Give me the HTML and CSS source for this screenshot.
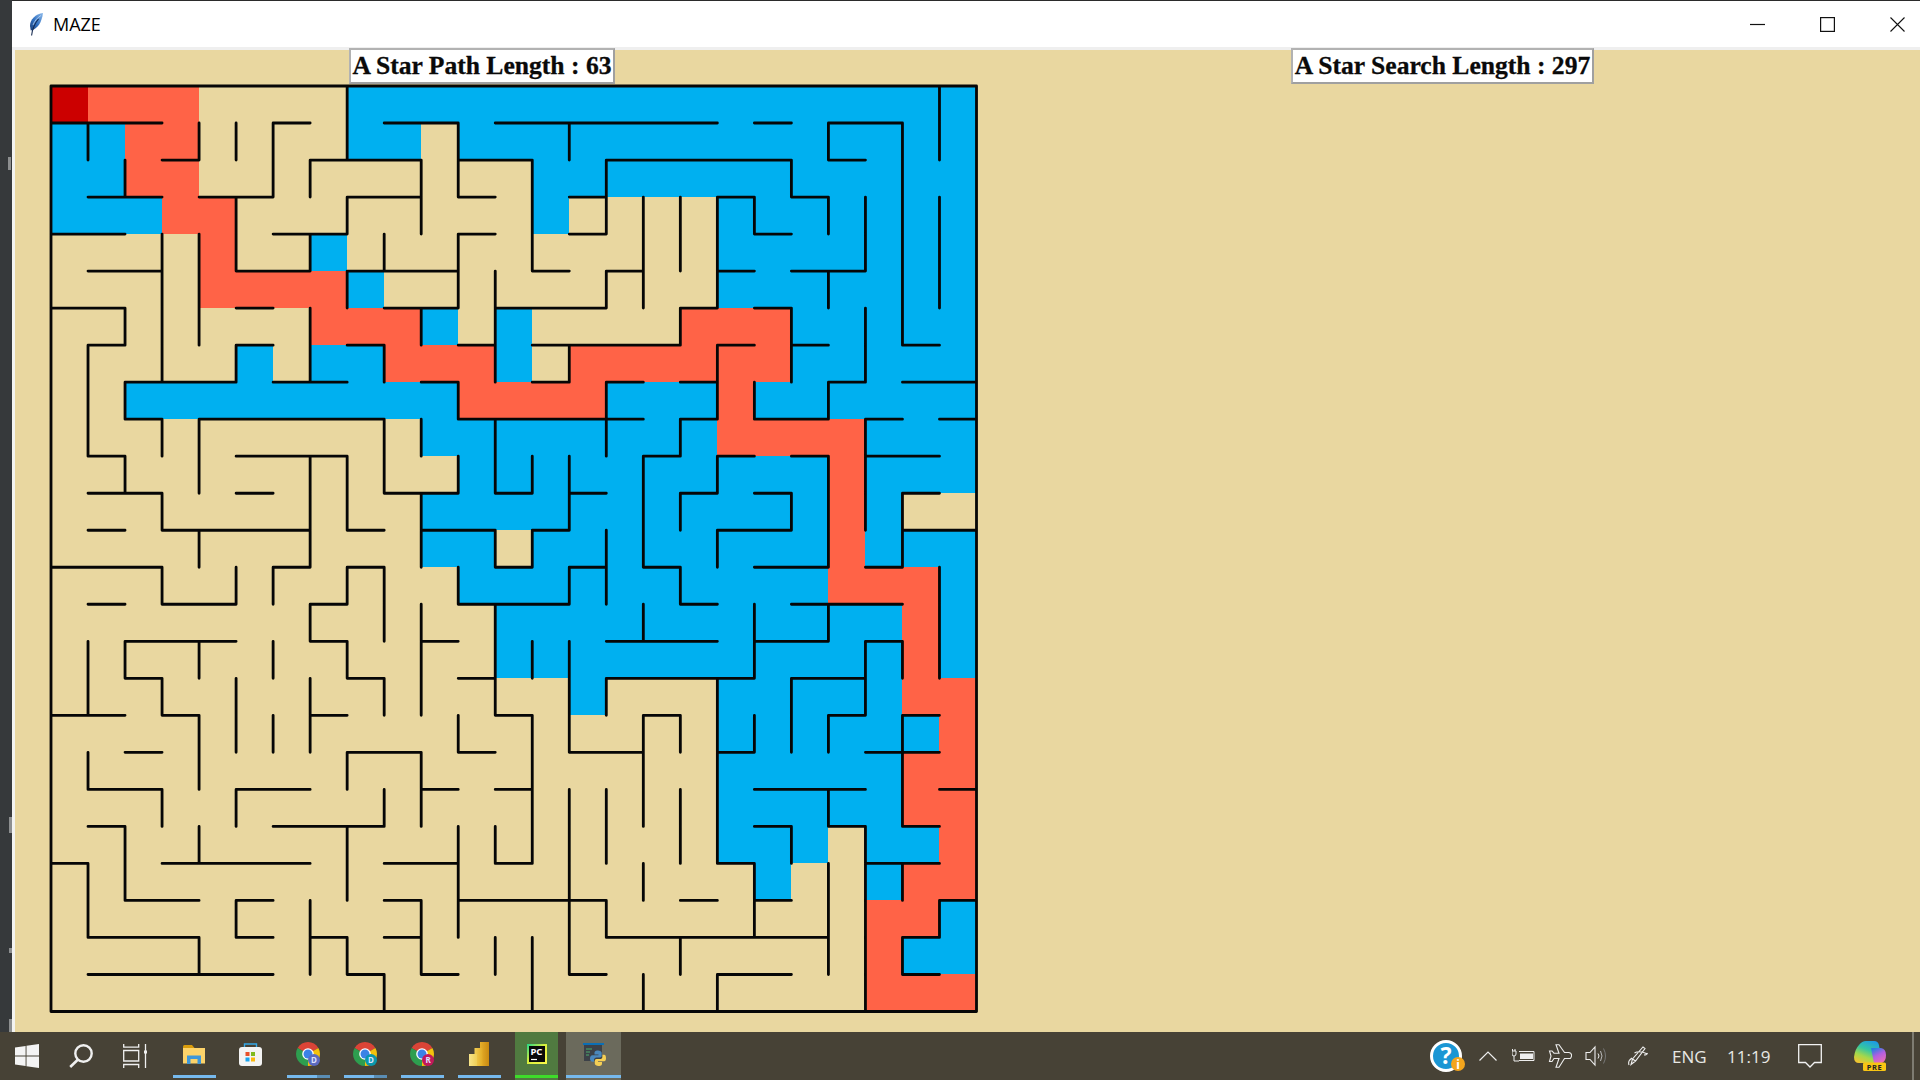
FILE: index.html
```html
<!DOCTYPE html>
<html lang="en">
<head>
<meta charset="utf-8">
<title>MAZE</title>
<link rel="stylesheet" href="styles.css">
</head>
<body>
<svg class="defs" width="0" height="0" aria-hidden="true">
  <symbol id="chrome" viewBox="0 0 24 24">
    <path fill="#db4437" d="M12 12L1.61 6A12 12 0 0 1 22.39 6Z"/>
    <path fill="#f4c20d" d="M12 12L22.39 6A12 12 0 0 1 12 24Z"/>
    <path fill="#2e9e4f" d="M12 12L12 24A12 12 0 0 1 1.61 6Z"/>
    <circle cx="12" cy="12" r="5.8" fill="#fff"/>
    <circle cx="12" cy="12" r="4.5" fill="#3b82e6"/>
  </symbol>
  <linearGradient id="pcg" x1="0" y1="0" x2="1" y2="1">
    <stop offset="0" stop-color="#21d789"/><stop offset=".45" stop-color="#d6ee3c"/><stop offset="1" stop-color="#fcf84a"/>
  </linearGradient>
  <linearGradient id="featherg" x1="1" y1="0" x2="0" y2="1">
    <stop offset="0" stop-color="#8fbcec"/><stop offset=".55" stop-color="#2f6fc0"/><stop offset="1" stop-color="#1b3f78"/>
  </linearGradient>
  <linearGradient id="pbig1" x1="0" y1="0" x2="1" y2="0"><stop offset="0" stop-color="#f8e58a"/><stop offset="1" stop-color="#f0ce55"/></linearGradient>
  <linearGradient id="pbig2" x1="0" y1="0" x2="1" y2="0"><stop offset="0" stop-color="#f3cf55"/><stop offset="1" stop-color="#e2ac25"/></linearGradient>
  <linearGradient id="pbig3" x1="0" y1="0" x2="1" y2="0"><stop offset="0" stop-color="#e6b02c"/><stop offset="1" stop-color="#c98a10"/></linearGradient>
  <linearGradient id="copg" x1=".7" y1="0" x2=".2" y2="1">
    <stop offset="0" stop-color="#1c9be6"/><stop offset=".4" stop-color="#35c7a0"/><stop offset=".7" stop-color="#a6d84a"/><stop offset="1" stop-color="#f2c230"/>
  </linearGradient>
  <linearGradient id="copg2" x1=".3" y1="0" x2=".8" y2="1">
    <stop offset="0" stop-color="#2a7fe0"/><stop offset=".45" stop-color="#b45fe0"/><stop offset="1" stop-color="#f070b0"/>
  </linearGradient>
</svg>
<div class="screen">
  <div class="desk">
    <div class="strip">
      <span class="tick tick-a"></span>
      <span class="tick tick-b"></span>
      <span class="tick tick-c"></span>
      <span class="tick tick-d"></span>
    </div>
    <div class="window">
      <header class="titlebar">
        <svg class="feather" viewBox="0 0 14 23">
          <path fill="url(#featherg)" d="M14 0C6.5 1 1 6.5 1 13L1.8 17.5C9 16 13 8.5 14 0Z"/>
          <path fill="none" stroke="#cfe0f5" stroke-width=".7" d="M12 2.5C8.5 4.5 5.5 8 4 12"/>
          <path fill="none" stroke="#14294f" stroke-width="1.1" d="M9.5 6C6 10 3.5 15 2.6 22.5"/>
        </svg>
        <span class="title">MAZE</span>
        <div class="controls">
          <span class="ctrl"><svg width="15" height="15" viewBox="0 0 15 15"><path d="M0 7.5H15" stroke="#111" stroke-width="1.2"/></svg></span>
          <span class="ctrl"><svg width="15" height="15" viewBox="0 0 15 15"><rect x=".6" y=".6" width="13.8" height="13.8" fill="none" stroke="#111" stroke-width="1.2"/></svg></span>
          <span class="ctrl"><svg width="15" height="15" viewBox="0 0 15 15"><path d="M.5.5L14.5 14.5M14.5.5L.5 14.5" stroke="#111" stroke-width="1.1"/></svg></span>
        </div>
      </header>
      <main class="canvas">
        <div class="labels">
          <div class="label label-path">A Star Path Length : 63</div>
          <div class="label label-search">A Star Search Length : 297</div>
        </div>
        <svg class="maze" viewBox="0 0 25 25" width="925.5" height="925.5">
          <path class="cell-blue" d="M8 0H25V1H8ZM0 1H2V2H0ZM8 1H10V2H8ZM11 1H25V2H11ZM0 2H2V3H0ZM13 2H25V3H13ZM0 3H3V4H0ZM13 3H14V4H13ZM18 3H25V4H18ZM7 4H8V5H7ZM18 4H25V5H18ZM8 5H9V6H8ZM18 5H25V6H18ZM10 6H11V7H10ZM12 6H13V7H12ZM20 6H25V7H20ZM5 7H6V8H5ZM7 7H9V8H7ZM12 7H13V8H12ZM20 7H25V8H20ZM2 8H11V9H2ZM15 8H18V9H15ZM19 8H25V9H19ZM10 9H18V10H10ZM22 9H25V10H22ZM11 10H21V11H11ZM22 10H25V11H22ZM10 11H21V12H10ZM22 11H23V12H22ZM10 12H12V13H10ZM13 12H21V13H13ZM22 12H25V13H22ZM11 13H21V14H11ZM24 13H25V14H24ZM12 14H23V15H12ZM24 14H25V15H24ZM12 15H23V16H12ZM24 15H25V16H24ZM14 16H15V17H14ZM18 16H23V17H18ZM18 17H24V18H18ZM18 18H23V19H18ZM18 19H23V20H18ZM18 20H21V21H18ZM22 20H24V21H22ZM19 21H20V22H19ZM22 21H23V22H22ZM24 22H25V23H24ZM23 23H25V24H23Z"/>
          <path class="cell-orange" d="M1 0H4V1H1ZM2 1H4V2H2ZM2 2H4V3H2ZM3 3H5V4H3ZM4 4H5V5H4ZM4 5H8V6H4ZM7 6H10V7H7ZM17 6H20V7H17ZM9 7H12V8H9ZM14 7H20V8H14ZM11 8H15V9H11ZM18 8H19V9H18ZM18 9H22V10H18ZM21 10H22V11H21ZM21 11H22V12H21ZM21 12H22V13H21ZM21 13H24V14H21ZM23 14H24V15H23ZM23 15H24V16H23ZM23 16H25V17H23ZM24 17H25V18H24ZM23 18H25V19H23ZM23 19H25V20H23ZM24 20H25V21H24ZM23 21H25V22H23ZM22 22H24V23H22ZM22 23H23V24H22ZM22 24H25V25H22Z"/>
          <rect class="cell-start" x="0" y="0" width="1" height="1"/>
          <path class="walls" d="M0 0H25V25H0Z
          M0 1H3M6 1H7M9 1H11M12 1H18M19 1H20M21 1H23
          M3 2H4M7 2H10M11 2H13M15 2H20M21 2H22
          M1 3H3M4 3H6M8 3H10M11 3H12M14 3H15M18 3H19M20 3H21
          M0 4H2M6 4H8M11 4H12M14 4H15M19 4H20
          M1 5H3M5 5H7M8 5H11M13 5H14M15 5H16M18 5H19M20 5H22
          M0 6H2M5 6H6M9 6H11M12 6H15M17 6H18M19 6H20
          M1 7H2M5 7H6M8 7H9M11 7H12M13 7H17M18 7H19M20 7H21M23 7H24
          M2 8H5M6 8H8M10 8H11M13 8H14M15 8H16M17 8H18M21 8H22M23 8H25
          M2 9H3M4 9H9M11 9H16M17 9H18M19 9H21M22 9H23M24 9H25
          M1 10H2M5 10H8M16 10H17M18 10H19M20 10H21M22 10H24
          M1 11H3M5 11H6M9 11H11M12 11H13M14 11H15M17 11H18M19 11H20M23 11H24
          M1 12H2M3 12H7M8 12H9M10 12H12M13 12H14M18 12H20M23 12H25
          M0 13H3M6 13H7M8 13H9M12 13H13M14 13H15M16 13H17M19 13H21M22 13H23
          M1 14H2M3 14H5M7 14H8M11 14H14M17 14H18M20 14H23
          M2 15H5M7 15H8M10 15H11M15 15H18M19 15H21M22 15H23
          M2 16H3M8 16H9M11 16H12M15 16H19M20 16H22
          M0 17H2M3 17H4M7 17H8M12 17H13M16 17H17M21 17H22M23 17H24
          M2 18H3M8 18H10M11 18H12M14 18H16M18 18H19M22 18H24
          M1 19H3M5 19H7M10 19H11M12 19H13M19 19H22M24 19H25
          M1 20H2M6 20H9M19 20H20M21 20H22M23 20H24
          M0 21H1M3 21H7M9 21H11M12 21H13M18 21H19M22 21H24
          M2 22H4M5 22H6M9 22H10M11 22H15M17 22H18M19 22H20M24 22H25
          M1 23H4M5 23H6M7 23H8M9 23H10M15 23H21M23 23H24
          M1 24H6M8 24H9M10 24H11M14 24H15M18 24H20M23 24H24
          M1 1V2M1 7V10M1 15V17M1 18V19M1 21V23
          M2 2V3M2 6V7M2 8V9M2 10V11M2 15V16M2 20V22
          M3 4V8M3 9V10M3 11V12M3 13V14M3 16V17M3 19V20
          M4 1V2M4 4V7M4 9V11M4 12V13M4 15V16M4 17V19M4 20V21M4 23V24
          M5 1V2M5 3V5M5 7V8M5 13V14M5 16V18M5 19V20M5 22V23
          M6 1V3M6 13V14M6 15V16M6 17V18
          M7 2V3M7 4V5M7 6V8M7 10V13M7 14V15M7 16V18M7 22V24
          M8 0V2M8 3V4M8 5V6M8 10V12M8 13V14M8 15V16M8 18V19M8 20V22M8 23V24
          M9 4V5M9 7V8M9 9V11M9 13V15M9 16V17M9 19V20M9 24V25
          M10 2V4M10 6V7M10 9V10M10 11V13M10 14V17M10 18V20M10 22V24
          M11 1V3M11 4V6M11 8V9M11 10V11M11 13V14M11 17V18M11 20V23
          M12 5V8M12 9V11M12 12V13M12 14V17M12 20V21M12 23V24
          M13 2V5M13 10V11M13 12V13M13 15V16M13 17V21M13 23V25
          M14 1V2M14 7V8M14 10V12M14 13V14M14 15V18M14 19V24
          M15 2V4M15 5V6M15 8V10M15 12V14M15 16V17M15 19V21M15 22V23
          M16 3V6M16 10V13M16 14V15M16 17V20M16 21V22M16 24V25
          M17 3V5M17 6V7M17 9V10M17 11V12M17 13V14M17 17V18M17 19V21M17 23V24
          M18 3V6M18 7V9M18 10V11M18 12V13M18 16V21M18 24V25
          M19 3V4M19 8V9M19 14V16M19 17V18M19 21V23
          M20 2V3M20 6V8M20 11V12M20 16V18M20 20V21
          M21 1V2M21 3V4M21 5V6M21 8V9M21 10V13M21 14V15M21 17V18M21 19V20M21 21V24
          M22 3V5M22 6V8M22 9V12M22 15V17M22 20V25
          M23 1V7M23 11V13M23 15V16M23 17V20M23 21V22M23 23V24
          M24 0V2M24 3V6M24 13V16M24 22V23"/>
        </svg>
      </main>
    </div>
  </div>
  <footer class="taskbar">
    <div class="start-group">
      <span class="sys">
        <svg width="24" height="24" viewBox="0 0 24 24"><path fill="#f4f4f4" d="M0 3.4L10.6 1.9V11.5H0ZM11.5 1.8L24 0V11.5H11.5ZM0 12.5H10.6V22.1L0 20.6ZM11.5 12.5H24V24L11.5 22.2Z"/></svg>
      </span>
      <span class="sys">
        <svg width="24" height="24" viewBox="0 0 24 24"><circle cx="14.5" cy="9.5" r="8.2" fill="none" stroke="#f0f0f0" stroke-width="2.4"/><path d="M9 15.5L1.2 23" stroke="#f0f0f0" stroke-width="2.6"/></svg>
      </span>
      <span class="sys">
        <svg width="25" height="24" viewBox="0 0 25 24"><path fill="none" stroke="#f0f0f0" stroke-width="1.3" d="M.7 0V3.2H15.7V0M.7 6.5H15.7V17H.7ZM.7 24V20.5H15.7V24M22.5 0V24"/><rect x="21" y="6.5" width="3" height="3" fill="#f0f0f0"/></svg>
      </span>
    </div>
    <div class="task task-left">
      <svg width="22" height="19" viewBox="0 0 22 19"><path fill="#d99c0c" d="M0 1.5Q0 0 1.5 0H9L11.5 3H0Z"/><path fill="#fcd36a" d="M0 3H22V18.5H0Z"/><path fill="#3f97d8" d="M4 10.5H18V19H14.5V14H7.5V19H4Z"/></svg>
      <span class="bar"></span>
    </div>
    <div class="task task-left">
      <svg width="23" height="23" viewBox="0 0 23 23"><path fill="none" stroke="#35a8e8" stroke-width="1.4" d="M5.5 6V1H17.5V6"/><rect y="4" width="23" height="19" rx="3" fill="#f3f3f3"/><rect x="6.5" y="9" width="4" height="4" fill="#e8502a"/><rect x="12" y="9" width="4" height="4" fill="#7fba1f"/><rect x="6.5" y="14.5" width="4" height="4" fill="#18a4ee"/><rect x="12" y="14.5" width="4" height="4" fill="#fbb80e"/></svg>
    </div>
    <div class="task">
      <svg class="chrome" width="32" height="30" viewBox="0 0 32 30"><use href="#chrome" width="24" height="24"/><circle cx="18" cy="18" r="6" fill="#5c6bc0"/><text class="badge" x="18" y="21">D</text></svg>
      <span class="bar"><i class="bar-split"></i></span>
    </div>
    <div class="task">
      <svg class="chrome" width="32" height="30" viewBox="0 0 32 30"><use href="#chrome" width="24" height="24"/><circle cx="18" cy="18" r="6" fill="#0a97ac"/><text class="badge" x="18" y="21">D</text></svg>
      <span class="bar"><i class="bar-split"></i></span>
    </div>
    <div class="task">
      <svg class="chrome" width="32" height="30" viewBox="0 0 32 30"><use href="#chrome" width="24" height="24"/><circle cx="18" cy="18" r="6" fill="#c2185b"/><text class="badge" x="18" y="21">R</text></svg>
      <span class="bar"></span>
    </div>
    <div class="task task-left">
      <svg width="20" height="24" viewBox="0 0 20 24"><path fill="url(#pbig3)" d="M11 0H20V24H11Z"/><path fill="url(#pbig2)" d="M5.5 6H13.5V24H5.5Z"/><path fill="url(#pbig1)" d="M0 12H8V24H0Z"/></svg>
      <span class="bar"></span>
    </div>
    <div class="task task-pc">
      <svg width="20" height="20" viewBox="0 0 20 20"><rect width="20" height="20" fill="url(#pcg)"/><rect x="2" y="2" width="16" height="16" fill="#0a0a0a"/><text class="pc" x="3.4" y="10.5">PC</text><path d="M4 15.5H10" stroke="#fff" stroke-width="1.2"/></svg>
      <span class="bar bar-pc"></span>
    </div>
    <div class="task task-py">
      <svg width="23" height="23" viewBox="0 0 23 23"><rect x="1" y="1" width="18" height="17" fill="#3c4148"/><rect width="21" height="2" fill="#0b6fb5"/><path stroke="#4cae6c" d="M3 6H9M3 9H7M3 12H6"/><path fill="#4a87bd" d="M15 7.5C11.8 7.5 11.5 9 11.5 10V11.5H15.5V12.2H9.5C7.8 12.2 7 13.8 7 15.4S7.8 18.8 9.5 18.8H11V16.8C11 15.4 12.2 14.4 13.5 14.4H17C18 14.4 18.7 13.6 18.7 12.7V10C18.7 8.6 17 7.5 15 7.5Z"/><path fill="#f5cf55" d="M15.5 23C18.7 23 19 21.5 19 20.5V19H15V18.3H21C22.7 18.3 23 16.7 23 15.1S22.7 11.7 21 11.7H19.5V13.7C19.5 15.1 18.3 16.1 17 16.1H13.5C12.5 16.1 11.8 16.9 11.8 17.8V20.5C11.8 21.9 13.5 23 15.5 23Z"/></svg>
      <span class="bar"></span>
    </div>
    <div class="tray">
      <svg class="t-help" width="35" height="32" viewBox="0 0 35 32"><circle cx="16" cy="16" r="14.5" fill="#1a96d4" stroke="#fff" stroke-width="3"/><text class="q" x="16" y="24">?</text><circle cx="28" cy="24" r="7" fill="#f3a51d"/><text class="inf" x="28" y="28.5">i</text></svg>
      <svg class="t-chev" width="18" height="10" viewBox="0 0 18 10"><path d="M.5 9.5L9 1L17.5 9.5" fill="none" stroke="#eee" stroke-width="1.2"/></svg>
      <svg class="t-batt" width="23" height="14" viewBox="0 0 23 14"><path fill="none" stroke="#eee" stroke-width="1" d="M7 2.5H22V11.5H7M.5 2V0M3 2V0M0 2H4V5Q4 7 2 7T0 5ZM2 7V12H7"/><rect x="8" y="4.5" width="13" height="5.5" fill="#eee"/></svg>
      <svg class="t-plane" width="24" height="24" viewBox="0 0 24 24"><path fill="none" stroke="#eee" stroke-width="1.1" d="M8 .7H11L16.5 8.5H21Q24 9 23.5 12T21 14.5H16.5L11 23.3H8L11 14.5H6L4 17.5H1.5L3 12L1.5 7H4L6 9.2H11Z"/></svg>
      <svg class="t-vol" width="22" height="22" viewBox="0 0 22 22"><path fill="none" stroke="#eee" stroke-width="1.1" d="M1 7.5H5L10 2V20L5 14.5H1Z"/><path fill="none" stroke="#eee" d="M13 8.5Q15 11 13 13.5"/><path fill="none" stroke="#bbb" d="M15.5 6Q18.5 11 15.5 16"/><path fill="none" stroke="#777" d="M18.5 3.5Q22.5 11 18.5 18.5"/></svg>
      <svg class="t-pen" width="20" height="20" viewBox="0 0 20 20"><path fill="none" stroke="#eee" stroke-width="1.1" d="M15 1L17 2.5L7.5 15L3 18.5L4.5 13ZM4.5 13L7.5 15M16 9Q19 9 19.5 7M1 19Q-.5 15 4 12M6.5 7Q11 4 19.5 8"/></svg>
      <span class="t-eng">ENG</span>
      <span class="t-time">11:19</span>
      <svg class="t-note" width="24" height="24" viewBox="0 0 24 24"><path fill="none" stroke="#f2f2f2" stroke-width="1.3" d="M.7.7H23.3V18.5H16.5L12 23L7.5 18.5H.7Z"/></svg>
      <svg class="t-cop" width="32" height="30" viewBox="0 0 32 30"><path fill="url(#copg)" d="M12 0H20Q24 0 25 4L28 22H5Q0 22 0 16Q1 8 5 4Q8 0 12 0Z"/><path fill="url(#copg2)" d="M17 7H27Q32 8 32 14Q32 20 28 22H20Z"/><rect x="9" y="21.5" width="23" height="8.5" rx="1.5" fill="#f8c514"/><text class="pre" x="20.5" y="28.5">PRE</text></svg>
      <span class="t-edge"></span>
    </div>
  </footer>
</div>
</body>
</html>
```
FILE: styles.css
```css
html, body { margin: 0; padding: 0; width: 1920px; height: 1080px; overflow: hidden; }
.defs { position: absolute; }
.screen { width: 1920px; height: 1080px; display: flex; flex-direction: column; }

.desk { flex: 1; display: flex; min-height: 0; }
.strip { width: 12px; background: #36393b; position: relative; flex: none; }
.tick { position: absolute; background: #8d8f90; width: 3px; }
.tick-a { left: 8px; top: 157px; height: 13px; }
.tick-b { left: 9px; top: 817px; height: 16px; }
.tick-c { left: 9px; top: 948px; height: 5px; }
.tick-d { left: 9px; top: 1019px; height: 13px; }

.window { flex: 1; display: flex; flex-direction: column; min-width: 0; }
.titlebar { height: 46px; background: #fff; border-top: 1px solid #2b2b2b; border-bottom: 3px solid #efefef; display: flex; align-items: center; flex: none; box-sizing: content-box; }
.feather { width: 14px; height: 23px; margin-left: 17px; }
.title { margin-left: 10px; font: 18px "Open Sans", "Noto Sans", sans-serif; color: #000; }
.controls { margin-left: auto; margin-right: -12px; display: flex; }
.ctrl { width: 70px; height: 46px; display: flex; align-items: center; justify-content: center; }

.canvas { flex: 1; background: #e9d7a0; border-left: 3px solid #f3f3f0; min-height: 0; }
.labels { display: flex; height: 36px; margin-top: -2px; margin-bottom: 2px; padding-left: 334px; position: relative; }
.label { box-sizing: border-box; height: 36px; background: #fff; border: 2px solid #b2b2b2; border-right-color: #a0a0a0; border-bottom-color: #a0a0a0; font: bold 25.6px/32px "Liberation Serif", serif; -webkit-text-stroke: .3px #0a0a0a; color: #0a0a0a; text-align: center; white-space: nowrap; }
.label-path { width: 266px; }
.label-search { width: 303px; margin-left: 676px; }

.maze { display: block; margin-left: 36px; overflow: visible; }
.cell-blue { fill: #00b0f0; shape-rendering: crispEdges; }
.cell-orange { fill: #ff6347; shape-rendering: crispEdges; }
.cell-start { fill: #cc0000; shape-rendering: crispEdges; }
.walls { fill: none; stroke: #060606; stroke-width: 0.076; stroke-linecap: round; stroke-linejoin: round; }

.taskbar { height: 48px; background: #474236; display: flex; flex: none; align-items: center; }
.start-group { display: flex; width: 173px; flex: none; }
.sys { width: 54px; display: flex; justify-content: center; }
.task { width: 43px; height: 48px; margin-right: 14px; display: flex; align-items: center; justify-content: center; position: relative; flex: none; padding-bottom: 4px; box-sizing: border-box; }
.task-left { padding-right: 2px; }
.bar { position: absolute; left: 0; right: 0; bottom: 2px; height: 3px; background: #76b9ed; display: block; }
.bar-split { position: absolute; right: 0; top: 0; bottom: 0; width: 13px; background: #5a8db4; }
.task-pc { background: #507a40; margin-right: 8px; }
.bar-pc { background: #3edc2a; }
.task-py { background: #6b6a5c; width: 55px; margin-right: 0; padding-left: 2px; }
.chrome { margin-left: 6px; margin-top: 6px; }
.badge { font: bold 8px "Noto Sans", sans-serif; fill: #dfe3ff; text-anchor: middle; }
.pc { font: bold 9.5px "Noto Sans", sans-serif; fill: #fff; }
.q { font: bold 23px "Noto Sans", sans-serif; fill: #fff; text-anchor: middle; }
.inf { font: bold 12px "Noto Sans", sans-serif; fill: #fff; text-anchor: middle; }
.pre { font: bold 7.5px "Noto Sans", sans-serif; fill: #222; text-anchor: middle; letter-spacing: .5px; }

.tray { margin-left: auto; display: flex; align-items: center; color: #e8e8e4; font: 17px "Open Sans", "Noto Sans", sans-serif; }
.t-chev { margin-left: 14px; }
.t-batt { margin-left: 15px; }
.t-plane { margin-left: 13px; }
.t-vol { margin-left: 13px; }
.t-pen { margin-left: 21px; }
.t-eng { margin-left: 24px; width: 33px; white-space: nowrap; }
.t-time { margin-left: 22px; width: 42px; white-space: nowrap; }
.t-note { margin-left: 29px; }
.t-cop { margin-left: 32px; }
.t-edge { margin-left: 26px; margin-right: 6px; width: 2px; height: 48px; background: #7e7c72; }
```
